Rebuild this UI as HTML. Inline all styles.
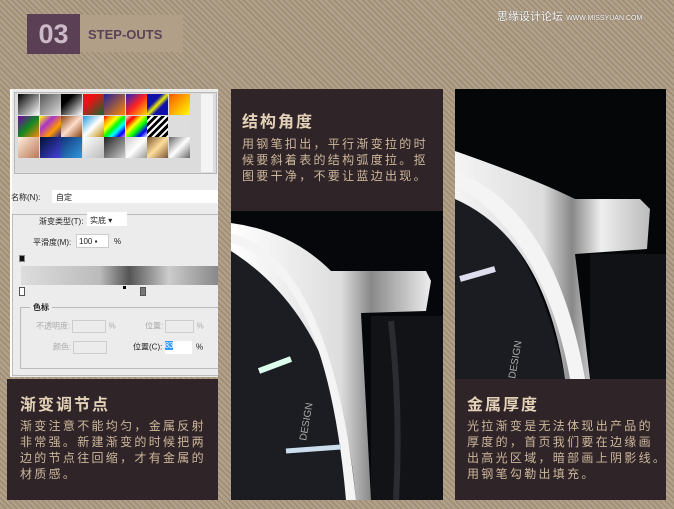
<!DOCTYPE html>
<html><head><meta charset="utf-8">
<style>
*{margin:0;padding:0;box-sizing:border-box}
body{width:674px;height:509px;overflow:hidden;position:relative;font-family:"Liberation Sans","Noto Sans CJK SC",sans-serif;
background:#a8977f;background-image:repeating-linear-gradient(45deg,#9c8a73 0 1px,#b3a28b 1px 3px,#a8977f 3px 4px);}
.abs{position:absolute}
.dark{background:#2f2427;color:#cdb79c}
.h{font-weight:bold;font-size:16px;letter-spacing:2px;color:#e4d2b8;white-space:nowrap}
.p{font-size:12px;line-height:16px;letter-spacing:2.3px;white-space:nowrap}
.sw{position:absolute;width:21px;height:21px}
.ps{font-size:8px;color:#222}
</style></head><body>
<!-- header -->
<div class="abs" style="left:80px;top:15px;width:103px;height:37px;background:#b19f88"></div>
<div class="abs" style="left:27px;top:14px;width:53px;height:40px;background:#5a3f55;color:#cdbac8;font:bold 27px/40px 'Liberation Sans',sans-serif;text-align:center">03</div>
<div class="abs" style="left:88px;top:27px;color:#5c4256;font:bold 13px 'Liberation Sans',sans-serif">STEP-OUTS</div>
<div class="abs" style="left:497px;top:8px;color:#fff;font-size:11px;text-shadow:0 0 1px #444">思缘设计论坛 <span style="font-size:7px">WWW.MISSYUAN.COM</span></div>

<!-- left panel -->
<div class="abs" style="left:10px;top:89px;width:208px;height:288px;background:#ececec;border-left:2px solid #fff"></div>
<div class="abs" style="left:14px;top:92px;width:203px;height:82px;border:1px solid #b8b8b8;background:#dcdcdc"></div>
<div class="abs" style="left:201px;top:94px;width:12px;height:78px;background:#f4f4f4"></div>
<div class="abs" style="left:18px;top:94px;width:183px;height:66px">
<div class="sw" style="left:0;top:0;background:linear-gradient(135deg,#000,#fff)"></div>
<div class="sw" style="left:21.5px;top:0;background:linear-gradient(135deg,#555,#ddd)"></div>
<div class="sw" style="left:43px;top:0;background:linear-gradient(135deg,#000 30%,#fff)"></div>
<div class="sw" style="left:64.5px;top:0;background:linear-gradient(135deg,#e11 30%,#163)"></div>
<div class="sw" style="left:86px;top:0;background:linear-gradient(135deg,#229,#f80)"></div>
<div class="sw" style="left:107.5px;top:0;background:linear-gradient(135deg,#22c,#f22,#fd0)"></div>
<div class="sw" style="left:129px;top:0;background:linear-gradient(135deg,#11a 35%,#ee0 50%,#11a 65%)"></div>
<div class="sw" style="left:150.5px;top:0;background:linear-gradient(135deg,#f50,#ff0)"></div>
<div class="sw" style="left:0;top:21.5px;background:linear-gradient(135deg,#70a,#182,#f80)"></div>
<div class="sw" style="left:21.5px;top:21.5px;background:linear-gradient(135deg,#ff0,#a3c,#f90,#229)"></div>
<div class="sw" style="left:43px;top:21.5px;background:linear-gradient(135deg,#841,#fdc,#841)"></div>
<div class="sw" style="left:64.5px;top:21.5px;background:linear-gradient(135deg,#29d,#fff,#b80)"></div>
<div class="sw" style="left:86px;top:21.5px;background:linear-gradient(135deg,red,orange,yellow,lime,cyan,blue,violet)"></div>
<div class="sw" style="left:107.5px;top:21.5px;background:linear-gradient(135deg,#eee,red,yellow,lime,blue,#eee)"></div>
<div class="sw" style="left:129px;top:21.5px;background:repeating-linear-gradient(135deg,#000 0 3px,#fff 3px 5px)"></div>
<div class="sw" style="left:150.5px;top:21.5px;background:#ddd"></div>
<div class="sw" style="left:0;top:43px;background:linear-gradient(135deg,#fed,#b75)"></div>
<div class="sw" style="left:21.5px;top:43px;background:linear-gradient(135deg,#013,#44d)"></div>
<div class="sw" style="left:43px;top:43px;background:linear-gradient(135deg,#137,#39d)"></div>
<div class="sw" style="left:64.5px;top:43px;background:linear-gradient(135deg,#fff,#bbb)"></div>
<div class="sw" style="left:86px;top:43px;background:linear-gradient(135deg,#222,#ccc)"></div>
<div class="sw" style="left:107.5px;top:43px;background:linear-gradient(135deg,#ccc,#fff,#999)"></div>
<div class="sw" style="left:129px;top:43px;background:linear-gradient(135deg,#753,#fd9,#753)"></div>
<div class="sw" style="left:150.5px;top:43px;background:linear-gradient(135deg,#666,#fff,#666)"></div>
</div>
<div class="abs ps" style="left:11px;top:192px">名称(N):</div>
<div class="abs ps" style="left:52px;top:190px;width:166px;height:13px;background:#fff;padding:2px 4px">自定</div>
<div class="abs" style="left:12px;top:214px;width:206px;height:162px;border:1px solid #bbb;border-right:none"></div>
<div class="abs ps" style="left:36px;top:216px;background:#ececec;padding:0 3px">渐变类型(T):</div>
<div class="abs ps" style="left:87px;top:212px;width:40px;height:14px;background:#fff;padding:3px">实底 ▾</div>
<div class="abs ps" style="left:33px;top:237px">平滑度(M):</div>
<div class="abs ps" style="left:76px;top:234px;width:33px;height:14px;background:#fff;border:1px solid #ccc;padding:2px">100 ▪</div>
<div class="abs ps" style="left:114px;top:237px">%</div>
<div class="abs" style="left:19px;top:255px;width:6px;height:7px;background:#111;border:1px solid #888"></div>
<div class="abs" style="left:21px;top:266px;width:197px;height:19px;background:linear-gradient(90deg,#ddd,#bbb 40%,#555 55%,#ccc 75%,#888)"></div>
<div class="abs" style="left:19px;top:287px;width:6px;height:9px;background:#fff;border:1px solid #555"></div>
<div class="abs" style="left:140px;top:287px;width:6px;height:9px;background:#777;border:1px solid #555"></div>
<div class="abs" style="left:123px;top:286px;width:3px;height:3px;background:#000"></div>
<div class="abs" style="left:20px;top:307px;width:198px;height:62px;border:1px solid #bbb;border-right:none"></div>
<div class="abs ps" style="left:30px;top:302px;background:#ececec;padding:0 3px;font-weight:bold">色标</div>
<div class="abs ps" style="left:36px;top:320px;color:#aaa">不透明度: <span style="display:inline-block;width:34px;height:13px;border:1px solid #ccc;vertical-align:middle"></span> %</div>
<div class="abs ps" style="left:145px;top:320px;color:#aaa">位置: <span style="display:inline-block;width:29px;height:13px;border:1px solid #ccc;vertical-align:middle"></span> %</div>
<div class="abs ps" style="left:53px;top:341px;color:#aaa">颜色: <span style="display:inline-block;width:34px;height:13px;border:1px solid #ccc;vertical-align:middle"></span></div>
<div class="abs ps" style="left:133px;top:341px">位置(C): <span style="display:inline-block;width:27px;height:13px;background:#fff;vertical-align:middle"><span style="background:#39f;color:#fff">83</span></span> &nbsp;%</div>

<div class="abs dark" style="left:7px;top:379px;width:211px;height:121px;padding:12px 0 0 13px">
<div class="h">渐变调节点</div>
<div class="p" style="margin-top:3px">渐变注意不能均匀，金属反射<br>非常强。新建渐变的时候把两<br>边的节点往回缩，才有金属的<br>材质感。</div>
</div>

<!-- middle panel -->
<div class="abs dark" style="left:231px;top:89px;width:212px;height:122px;padding:19px 0 0 11px">
<div class="h">结构角度</div>
<div class="p" style="margin-top:4px">用钢笔扣出，平行渐变拉的时<br>候要斜着表的结构弧度拉。抠<br>图要干净，不要让蓝边出现。</div>
</div>
<svg class="abs" style="left:231px;top:211px" width="212" height="289" viewBox="0 0 212 289">
<defs><linearGradient id="m1" x1="0" x2="1"><stop offset="0" stop-color="#fff"/><stop offset=".55" stop-color="#ddd"/><stop offset=".7" stop-color="#888"/><stop offset="1" stop-color="#eee"/></linearGradient></defs>
<rect width="212" height="289" fill="#06070a"/>
<path d="M0 30 Q90 60 140 280 L130 289 L0 289Z" fill="#1b1d22"/>
<path d="M0 12 Q60 20 100 60 L195 60 L200 70 L195 100 L130 102 L140 289 L125 289 Q110 110 0 40Z" fill="url(#m1)"/>
<path d="M0 22 Q100 50 125 289 L115 289 Q95 60 0 32Z" fill="#f4f4f4"/>
<rect x="140" y="105" width="72" height="184" fill="#121317"/>
<path d="M160 110 Q170 200 165 289" stroke="#2a2c31" stroke-width="6" fill="none"/>
<path d="M28 160 L60 148" stroke="#dfe" stroke-width="6"/>
<path d="M55 240 L110 236" stroke="#cde" stroke-width="5"/>
<text x="75" y="230" fill="#aaa" font-size="10" transform="rotate(-80 75 230)" font-family="Liberation Sans">DESIGN</text>
</svg>

<!-- right panel -->
<svg class="abs" style="left:455px;top:89px" width="211" height="290" viewBox="0 0 211 290">
<defs><linearGradient id="m2" x1="0" x2="1"><stop offset="0" stop-color="#f4f4f4"/><stop offset=".45" stop-color="#ddd"/><stop offset=".6" stop-color="#888"/><stop offset=".75" stop-color="#eee"/><stop offset="1" stop-color="#bbb"/></linearGradient></defs>
<rect width="211" height="290" fill="#050608"/>
<path d="M0 105 Q80 140 110 290 L0 290Z" fill="#1a1c21"/>
<path d="M0 62 Q80 90 120 110 L185 110 L195 120 L192 160 L120 165 L135 290 L110 290 Q90 150 0 110Z" fill="url(#m2)"/>
<path d="M0 82 Q100 120 130 290 L115 290 Q90 150 0 95Z" fill="#f4f4f4"/>
<rect x="135" y="165" width="76" height="125" fill="#111216"/>
<path d="M5 190 L40 180" stroke="#dde" stroke-width="6"/>
<text x="60" y="290" fill="#aaa" font-size="10" transform="rotate(-80 60 290)" font-family="Liberation Sans">DESIGN</text>
</svg>
<div class="abs dark" style="left:455px;top:379px;width:211px;height:121px;padding:12px 0 0 12px;overflow:hidden">
<div class="h">金属厚度</div>
<div class="p" style="margin-top:3px">光拉渐变是无法体现出产品的<br>厚度的，首页我们要在边缘画<br>出高光区域，暗部画上阴影线。<br>用钢笔勾勒出填充。</div>
</div>
</body></html>
